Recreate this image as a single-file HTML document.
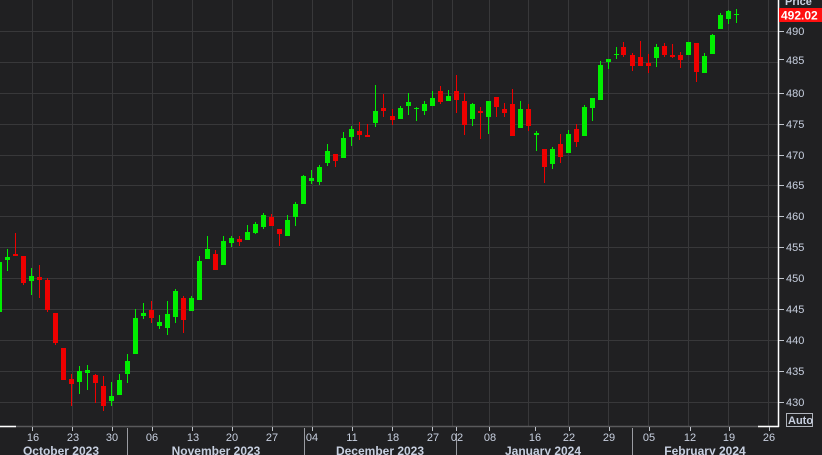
<!DOCTYPE html>
<html><head><meta charset="utf-8"><style>
html,body{margin:0;padding:0;background:#202022;width:822px;height:455px;overflow:hidden}
svg{display:block}
text{font-family:"Liberation Sans",sans-serif}
</style></head><body>
<svg width="822" height="455" viewBox="0 0 822 455" xmlns="http://www.w3.org/2000/svg">
<rect width="822" height="455" fill="#202022"/>
<g stroke="#38383a" stroke-width="1">
<line x1="0" y1="31.5" x2="778" y2="31.5"/><line x1="0" y1="62.5" x2="778" y2="62.5"/><line x1="0" y1="93.5" x2="778" y2="93.5"/><line x1="0" y1="124.5" x2="778" y2="124.5"/><line x1="0" y1="155.5" x2="778" y2="155.5"/><line x1="0" y1="185.5" x2="778" y2="185.5"/><line x1="0" y1="216.5" x2="778" y2="216.5"/><line x1="0" y1="247.5" x2="778" y2="247.5"/><line x1="0" y1="278.5" x2="778" y2="278.5"/><line x1="0" y1="309.5" x2="778" y2="309.5"/><line x1="0" y1="340.5" x2="778" y2="340.5"/><line x1="0" y1="371.5" x2="778" y2="371.5"/><line x1="0" y1="402.5" x2="778" y2="402.5"/>
<line x1="32.5" y1="0" x2="32.5" y2="426"/><line x1="72.5" y1="0" x2="72.5" y2="426"/><line x1="112.5" y1="0" x2="112.5" y2="426"/><line x1="152.5" y1="0" x2="152.5" y2="426"/><line x1="192.5" y1="0" x2="192.5" y2="426"/><line x1="232.5" y1="0" x2="232.5" y2="426"/><line x1="272.5" y1="0" x2="272.5" y2="426"/><line x1="312.5" y1="0" x2="312.5" y2="426"/><line x1="352.5" y1="0" x2="352.5" y2="426"/><line x1="392.5" y1="0" x2="392.5" y2="426"/><line x1="432.5" y1="0" x2="432.5" y2="426"/><line x1="452.5" y1="0" x2="452.5" y2="426"/><line x1="489.5" y1="0" x2="489.5" y2="426"/><line x1="528.5" y1="0" x2="528.5" y2="426"/><line x1="568.5" y1="0" x2="568.5" y2="426"/><line x1="608.5" y1="0" x2="608.5" y2="426"/><line x1="648.5" y1="0" x2="648.5" y2="426"/><line x1="688.5" y1="0" x2="688.5" y2="426"/><line x1="728.5" y1="0" x2="728.5" y2="426"/><line x1="768.5" y1="0" x2="768.5" y2="426"/>
</g>
<!-- green candles -->
<g fill="#00ee00" stroke="#00ee00" stroke-width="1">
<rect x="-2" y="262" width="4" height="50" stroke="none"/>
<line x1="7.5" y1="249" x2="7.5" y2="271"/><rect x="5" y="257" width="5" height="3" stroke="none"/>
<line x1="31.5" y1="268" x2="31.5" y2="295"/><rect x="29" y="276" width="5" height="5" stroke="none"/>
<line x1="79.5" y1="366" x2="79.5" y2="394"/><rect x="77" y="371" width="5" height="11" stroke="none"/>
<line x1="87.5" y1="365" x2="87.5" y2="390"/><rect x="85" y="370" width="5" height="3" stroke="none"/>
<line x1="111.5" y1="382" x2="111.5" y2="406"/><rect x="109" y="396" width="5" height="5" stroke="none"/>
<line x1="119.5" y1="374" x2="119.5" y2="395"/><rect x="117" y="380" width="5" height="15" stroke="none"/>
<line x1="127.5" y1="354" x2="127.5" y2="383"/><rect x="125" y="361" width="5" height="13" stroke="none"/>
<line x1="135.5" y1="309" x2="135.5" y2="354"/><rect x="133" y="318" width="5" height="36" stroke="none"/>
<line x1="143.5" y1="303" x2="143.5" y2="319"/><rect x="141" y="313" width="5" height="3" stroke="none"/>
<line x1="159.5" y1="315" x2="159.5" y2="329"/><rect x="157" y="322" width="5" height="4" stroke="none"/>
<line x1="167.5" y1="301" x2="167.5" y2="335"/><rect x="165" y="314" width="5" height="14" stroke="none"/>
<line x1="175.5" y1="289" x2="175.5" y2="323"/><rect x="173" y="291" width="5" height="26" stroke="none"/>
<line x1="191.5" y1="296" x2="191.5" y2="311"/><rect x="189" y="298" width="5" height="13" stroke="none"/>
<line x1="199.5" y1="256" x2="199.5" y2="300"/><rect x="197" y="261" width="5" height="39" stroke="none"/>
<line x1="207.5" y1="236" x2="207.5" y2="259"/><rect x="205" y="249" width="5" height="10" stroke="none"/>
<line x1="223.5" y1="236" x2="223.5" y2="265"/><rect x="221" y="241" width="5" height="24" stroke="none"/>
<line x1="231.5" y1="236" x2="231.5" y2="247"/><rect x="229" y="238" width="5" height="5" stroke="none"/>
<line x1="247.5" y1="225" x2="247.5" y2="240"/><rect x="245" y="232" width="5" height="8" stroke="none"/>
<line x1="255.5" y1="222" x2="255.5" y2="234"/><rect x="253" y="224" width="5" height="9" stroke="none"/>
<line x1="263.5" y1="213" x2="263.5" y2="229"/><rect x="261" y="215" width="5" height="12" stroke="none"/>
<line x1="287.5" y1="215" x2="287.5" y2="236"/><rect x="285" y="220" width="5" height="16" stroke="none"/>
<line x1="295.5" y1="202" x2="295.5" y2="226"/><rect x="293" y="204" width="5" height="13" stroke="none"/>
<line x1="303.5" y1="175" x2="303.5" y2="204"/><rect x="301" y="176" width="5" height="28" stroke="none"/>
<line x1="311.5" y1="170" x2="311.5" y2="184"/><rect x="309" y="178" width="5" height="3" stroke="none"/>
<line x1="319.5" y1="165" x2="319.5" y2="185"/><rect x="317" y="167" width="5" height="15" stroke="none"/>
<line x1="327.5" y1="144" x2="327.5" y2="166"/><rect x="325" y="151" width="5" height="12" stroke="none"/>
<line x1="343.5" y1="132" x2="343.5" y2="158"/><rect x="341" y="138" width="5" height="20" stroke="none"/>
<line x1="351.5" y1="126" x2="351.5" y2="146"/><rect x="349" y="129" width="5" height="8" stroke="none"/>
<line x1="375.5" y1="85" x2="375.5" y2="127"/><rect x="373" y="111" width="5" height="12" stroke="none"/>
<line x1="400.5" y1="106" x2="400.5" y2="119"/><rect x="398" y="108" width="5" height="11" stroke="none"/>
<line x1="408.5" y1="93" x2="408.5" y2="115"/><rect x="406" y="102" width="5" height="4" stroke="none"/>
<line x1="416.5" y1="107" x2="416.5" y2="121"/><rect x="414" y="108" width="5" height="1" stroke="none"/>
<line x1="424.5" y1="101" x2="424.5" y2="115"/><rect x="422" y="104" width="5" height="7" stroke="none"/>
<line x1="432.5" y1="91" x2="432.5" y2="106"/><rect x="430" y="98" width="5" height="8" stroke="none"/>
<line x1="448.5" y1="90" x2="448.5" y2="101"/><rect x="446" y="96" width="5" height="5" stroke="none"/>
<line x1="472.5" y1="103" x2="472.5" y2="126"/><rect x="470" y="104" width="5" height="15" stroke="none"/>
<line x1="488.5" y1="101" x2="488.5" y2="134"/><rect x="486" y="101" width="5" height="16" stroke="none"/>
<line x1="520.5" y1="101" x2="520.5" y2="128"/><rect x="518" y="109" width="5" height="19" stroke="none"/>
<line x1="536.5" y1="131" x2="536.5" y2="151"/><rect x="534" y="133" width="5" height="2" stroke="none"/>
<line x1="552.5" y1="147" x2="552.5" y2="169"/><rect x="550" y="149" width="5" height="15" stroke="none"/>
<line x1="568.5" y1="130" x2="568.5" y2="153"/><rect x="566" y="134" width="5" height="19" stroke="none"/>
<line x1="584.5" y1="105" x2="584.5" y2="136"/><rect x="582" y="107" width="5" height="29" stroke="none"/>
<line x1="592.5" y1="98" x2="592.5" y2="121"/><rect x="590" y="98" width="5" height="10" stroke="none"/>
<line x1="600.5" y1="61" x2="600.5" y2="100"/><rect x="598" y="65" width="5" height="35" stroke="none"/>
<line x1="608.5" y1="59" x2="608.5" y2="69"/><rect x="606" y="59" width="5" height="3" stroke="none"/>
<line x1="616.5" y1="47" x2="616.5" y2="59"/><rect x="614" y="54" width="5" height="1" stroke="none"/>
<line x1="656.5" y1="44" x2="656.5" y2="67"/><rect x="654" y="47" width="5" height="11" stroke="none"/>
<line x1="688.5" y1="42" x2="688.5" y2="55"/><rect x="686" y="42" width="5" height="13" stroke="none"/>
<line x1="704.5" y1="53" x2="704.5" y2="73"/><rect x="702" y="56" width="5" height="17" stroke="none"/>
<line x1="712.5" y1="34" x2="712.5" y2="54"/><rect x="710" y="35" width="5" height="19" stroke="none"/>
<line x1="720.5" y1="13" x2="720.5" y2="29"/><rect x="718" y="15" width="5" height="14" stroke="none"/>
<line x1="728.5" y1="10" x2="728.5" y2="24"/><rect x="726" y="11" width="5" height="8" stroke="none"/>
<line x1="736.5" y1="9" x2="736.5" y2="23"/><rect x="734" y="14" width="5" height="1" stroke="none"/>
</g>
<!-- red candles -->
<g fill="#ee0000" stroke="#ee0000" stroke-width="1">
<line x1="15.5" y1="233" x2="15.5" y2="256"/><rect x="13" y="254" width="5" height="2" stroke="none"/>
<line x1="23.5" y1="256" x2="23.5" y2="285"/><rect x="21" y="256" width="5" height="27" stroke="none"/>
<line x1="39.5" y1="265" x2="39.5" y2="298"/><rect x="37" y="277" width="5" height="3" stroke="none"/>
<line x1="47.5" y1="278" x2="47.5" y2="312"/><rect x="45" y="280" width="5" height="30" stroke="none"/>
<line x1="55.5" y1="313" x2="55.5" y2="345"/><rect x="53" y="313" width="5" height="30" stroke="none"/>
<line x1="63.5" y1="348" x2="63.5" y2="380"/><rect x="61" y="348" width="5" height="32" stroke="none"/>
<line x1="71.5" y1="374" x2="71.5" y2="406"/><rect x="69" y="379" width="5" height="5" stroke="none"/>
<line x1="95.5" y1="374" x2="95.5" y2="403"/><rect x="93" y="375" width="5" height="8" stroke="none"/>
<line x1="103.5" y1="376" x2="103.5" y2="411"/><rect x="101" y="386" width="5" height="20" stroke="none"/>
<line x1="151.5" y1="301" x2="151.5" y2="323"/><rect x="149" y="310" width="5" height="8" stroke="none"/>
<line x1="183.5" y1="296" x2="183.5" y2="333"/><rect x="181" y="298" width="5" height="22" stroke="none"/>
<line x1="215.5" y1="250" x2="215.5" y2="270"/><rect x="213" y="254" width="5" height="16" stroke="none"/>
<line x1="239.5" y1="236" x2="239.5" y2="246"/><rect x="237" y="239" width="5" height="3" stroke="none"/>
<line x1="271.5" y1="214" x2="271.5" y2="226"/><rect x="269" y="217" width="5" height="9" stroke="none"/>
<line x1="279.5" y1="229" x2="279.5" y2="246"/><rect x="277" y="229" width="5" height="5" stroke="none"/>
<line x1="335.5" y1="154" x2="335.5" y2="167"/><rect x="333" y="154" width="5" height="7" stroke="none"/>
<line x1="359.5" y1="122" x2="359.5" y2="140"/><rect x="357" y="131" width="5" height="4" stroke="none"/>
<line x1="367.5" y1="124" x2="367.5" y2="137"/><rect x="365" y="135" width="5" height="2" stroke="none"/>
<line x1="383.5" y1="94" x2="383.5" y2="117"/><rect x="381" y="108" width="5" height="3" stroke="none"/>
<line x1="392.5" y1="109" x2="392.5" y2="125"/><rect x="390" y="116" width="5" height="4" stroke="none"/>
<line x1="440.5" y1="86" x2="440.5" y2="104"/><rect x="438" y="91" width="5" height="11" stroke="none"/>
<line x1="456.5" y1="75" x2="456.5" y2="113"/><rect x="454" y="91" width="5" height="9" stroke="none"/>
<line x1="464.5" y1="93" x2="464.5" y2="135"/><rect x="462" y="101" width="5" height="24" stroke="none"/>
<line x1="480.5" y1="107" x2="480.5" y2="139"/><rect x="478" y="111" width="5" height="2" stroke="none"/>
<line x1="496.5" y1="97" x2="496.5" y2="117"/><rect x="494" y="97" width="5" height="10" stroke="none"/>
<line x1="504.5" y1="103" x2="504.5" y2="117"/><rect x="502" y="109" width="5" height="4" stroke="none"/>
<line x1="512.5" y1="89" x2="512.5" y2="136"/><rect x="510" y="104" width="5" height="32" stroke="none"/>
<line x1="528.5" y1="104" x2="528.5" y2="131"/><rect x="526" y="109" width="5" height="17" stroke="none"/>
<line x1="544.5" y1="149" x2="544.5" y2="183"/><rect x="542" y="149" width="5" height="18" stroke="none"/>
<line x1="560.5" y1="134" x2="560.5" y2="163"/><rect x="558" y="144" width="5" height="13" stroke="none"/>
<line x1="576.5" y1="124" x2="576.5" y2="147"/><rect x="574" y="129" width="5" height="13" stroke="none"/>
<line x1="623.5" y1="42" x2="623.5" y2="57"/><rect x="621" y="47" width="5" height="8" stroke="none"/>
<line x1="632.5" y1="53" x2="632.5" y2="71"/><rect x="630" y="55" width="5" height="11" stroke="none"/>
<line x1="640.5" y1="41" x2="640.5" y2="66"/><rect x="638" y="57" width="5" height="9" stroke="none"/>
<line x1="648.5" y1="54" x2="648.5" y2="73"/><rect x="646" y="63" width="5" height="3" stroke="none"/>
<line x1="664.5" y1="43" x2="664.5" y2="57"/><rect x="662" y="46" width="5" height="9" stroke="none"/>
<line x1="672.5" y1="44" x2="672.5" y2="58"/><rect x="670" y="55" width="5" height="2" stroke="none"/>
<line x1="680.5" y1="52" x2="680.5" y2="68"/><rect x="678" y="55" width="5" height="5" stroke="none"/>
<line x1="696.5" y1="43" x2="696.5" y2="82"/><rect x="694" y="43" width="5" height="29" stroke="none"/>
</g>
<!-- axes -->
<line x1="0" y1="426.5" x2="778" y2="426.5" stroke="#5a5a5c" stroke-width="1.5"/>
<line x1="0" y1="426.5" x2="16" y2="426.5" stroke="#ffffff" stroke-width="1.5"/>
<line x1="758" y1="426.5" x2="779" y2="426.5" stroke="#ffffff" stroke-width="1.5"/>
<line x1="778.5" y1="0" x2="778.5" y2="427" stroke="#ffffff" stroke-width="1.5"/>
<g stroke="#c0c4cc" stroke-width="1">
<line x1="779" y1="31.5" x2="784" y2="31.5"/><line x1="779" y1="59.5" x2="784" y2="59.5"/><line x1="779" y1="93.5" x2="784" y2="93.5"/><line x1="779" y1="124.5" x2="784" y2="124.5"/><line x1="779" y1="155.5" x2="784" y2="155.5"/><line x1="779" y1="185.5" x2="784" y2="185.5"/><line x1="779" y1="216.5" x2="784" y2="216.5"/><line x1="779" y1="247.5" x2="784" y2="247.5"/><line x1="779" y1="278.5" x2="784" y2="278.5"/><line x1="779" y1="309.5" x2="784" y2="309.5"/><line x1="779" y1="340.5" x2="784" y2="340.5"/><line x1="779" y1="371.5" x2="784" y2="371.5"/><line x1="779" y1="402.5" x2="784" y2="402.5"/>
<line x1="32.5" y1="427" x2="32.5" y2="431"/><line x1="72.5" y1="427" x2="72.5" y2="431"/><line x1="112.5" y1="427" x2="112.5" y2="431"/><line x1="152.5" y1="427" x2="152.5" y2="431"/><line x1="192.5" y1="427" x2="192.5" y2="431"/><line x1="232.5" y1="427" x2="232.5" y2="431"/><line x1="272.5" y1="427" x2="272.5" y2="431"/><line x1="312.5" y1="427" x2="312.5" y2="431"/><line x1="352.5" y1="427" x2="352.5" y2="431"/><line x1="392.5" y1="427" x2="392.5" y2="431"/><line x1="432.5" y1="427" x2="432.5" y2="431"/><line x1="456.5" y1="427" x2="456.5" y2="431"/><line x1="489.5" y1="427" x2="489.5" y2="431"/><line x1="535.5" y1="427" x2="535.5" y2="431"/><line x1="569.5" y1="427" x2="569.5" y2="431"/><line x1="609.5" y1="427" x2="609.5" y2="431"/><line x1="649.5" y1="427" x2="649.5" y2="431"/><line x1="690.5" y1="427" x2="690.5" y2="431"/><line x1="729.5" y1="427" x2="729.5" y2="431"/><line x1="769.5" y1="427" x2="769.5" y2="431"/>
</g>
<g stroke="#9a9ca2" stroke-width="1">
<line x1="127.5" y1="428" x2="127.5" y2="455"/><line x1="304.5" y1="428" x2="304.5" y2="455"/><line x1="456.5" y1="433" x2="456.5" y2="455"/><line x1="632.5" y1="428" x2="632.5" y2="455"/>
</g>
<g fill="#c8d0e0" font-size="11" text-anchor="middle">
<text x="33" y="441">16</text><text x="73" y="441">23</text><text x="112" y="441">30</text><text x="152" y="441">06</text><text x="193" y="441">13</text><text x="232" y="441">20</text><text x="272" y="441">27</text><text x="312" y="441">04</text><text x="352" y="441">11</text><text x="393" y="441">18</text><text x="433" y="441">27</text><text x="457" y="441">02</text><text x="490" y="441">08</text><text x="535" y="441">16</text><text x="569" y="441">22</text><text x="609" y="441">29</text><text x="649" y="441">05</text><text x="690" y="441">12</text><text x="729" y="441">19</text><text x="769" y="441">26</text>
</g>
<g fill="#c8d0e0" font-size="12" font-weight="bold" text-anchor="middle">
<text x="61" y="455">October 2023</text><text x="216" y="455">November 2023</text><text x="380" y="455">December 2023</text><text x="543" y="455">January 2024</text><text x="705" y="455">February 2024</text>
</g>
<g fill="#c8d0e0" font-size="11">
<text x="786" y="35">490</text><text x="786" y="64">485</text><text x="786" y="97">480</text><text x="786" y="128">475</text><text x="786" y="159">470</text><text x="786" y="189">465</text><text x="786" y="220">460</text><text x="786" y="251">455</text><text x="786" y="282">450</text><text x="786" y="313">445</text><text x="786" y="344">440</text><text x="786" y="375">435</text><text x="786" y="406">430</text>
<text x="785" y="5" font-weight="bold">Price</text>
</g>
<rect x="779" y="8" width="43" height="14" fill="#ff1010"/>
<text x="781" y="19.5" fill="#ffffff" font-size="12" font-weight="bold">492.02</text>
<rect x="786.5" y="413.5" width="26" height="13" fill="none" stroke="#b0b4bc" stroke-width="1"/>
<text x="788" y="424" fill="#c8d0e0" font-size="11" font-weight="bold">Auto</text>
</svg>
</body></html>
